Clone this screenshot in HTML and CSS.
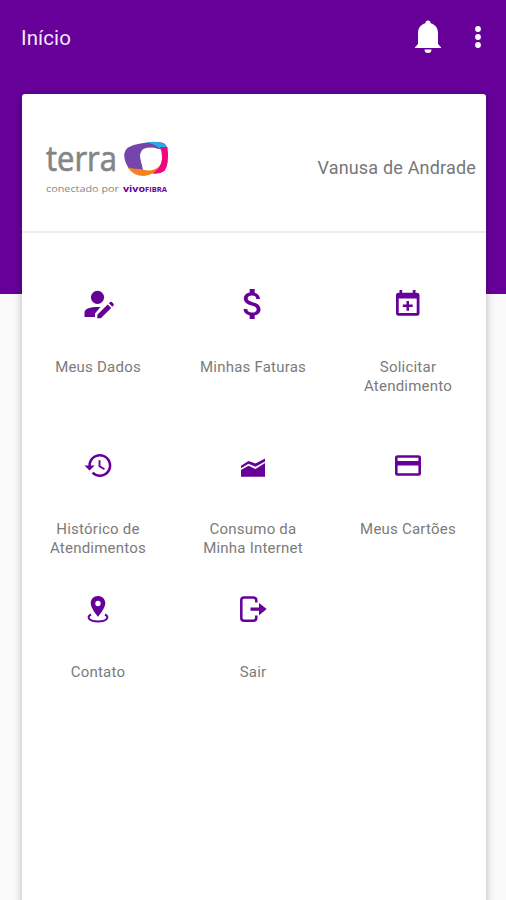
FILE: index.html
```html
<!DOCTYPE html>
<html lang="pt-BR">
<head>
<meta charset="utf-8">
<title>Início</title>
<link rel="stylesheet" href="styles.css">
</head>
<body>
<div class="app">
  <header class="bar">
    <h1 class="title">Início</h1>
    <svg class="bell" viewBox="0 0 26 34"><path d="M13 0.5a2.6 2.6 0 0 1 2.6 2.7C20.5 4.6 23 8 23 13.500V24l3 3.300V28H0v-.7L3 24V13.500C3 8 5.500 4.600 10.400 3.200A2.600 2.600 0 0 1 13 .5zM9.500 29.500h7a3.500 3.500 0 0 1-7 0z"/></svg>
    <svg class="more" viewBox="0 0 6 24"><circle cx="3" cy="4" r="2.900"/><circle cx="3" cy="12" r="2.900"/><circle cx="3" cy="20" r="2.900"/></svg>
  </header>
  <main class="card">
    <section class="account">
      <svg class="logo" viewBox="0 0 126 56" role="img">
        <text class="brand" x="1" y="31.500" textLength="71" lengthAdjust="spacingAndGlyphs">terra</text>
        <path fill="#7545ab" d="M83 8.500Q93 3 113 3Q122 3 122 10L113 10Q96 6 95 17L98 31L84 30Q75 15 83 8.500Z"/>
        <path fill="#26aee4" d="M101 3.200Q120 1 122 9L116 11Q111 5 101 3.200Z"/>
        <path fill="#ed087e" d="M115 8L122.500 8Q124.500 25 119.500 32Q114 36 105 34Q116 30 117 20Q117 12 115 8Z"/>
        <path fill="#f58220" d="M83 28.500Q90 30 96 30Q107 34 114 27Q110 36 99 37Q88 37 83 28.500Z"/>
        <path fill="#fff" d="M96.500 12Q98 8.500 106 8.500Q114.500 8.500 116 14Q118 26 110 30Q103 32 98 28Q94 19 96.500 12Z"/>
        <text class="by" x="1" y="53" textLength="73" lengthAdjust="spacingAndGlyphs">conectado por</text>
        <text class="vivo" x="78" y="53" textLength="22" lengthAdjust="spacingAndGlyphs">vivo</text>
        <text class="fibra" x="100" y="53" textLength="22" lengthAdjust="spacingAndGlyphs">FIBRA</text>
      </svg>
      <span class="name">Vanusa de Andrade</span>
    </section>
    <nav class="menu">
      <a class="item"><svg class="icon" viewBox="0 0 40 40"><circle cx="19.500" cy="13.300" r="6.600"/><path d="M6.500 33v-4.500C6.500 24 14 22.600 22.500 23L17 29.500V33zM19.300 34.300v-3.500L29.700 20.400l3.500 3.500L22.800 34.300zM30.900 19.300l1.300-1.200q.8-.7 1.600 0l1.700 1.700q.7.8 0 1.600l-1.200 1.300z"/></svg><span class="label">Meus Dados</span></a>
      <a class="item"><svg class="icon" viewBox="0 0 24 24"><path d="M11.800 10.900c-2.270-.59-3-1.200-3-2.150 0-1.090 1.010-1.850 2.700-1.850 1.780 0 2.440.85 2.500 2.100h2.210c-.07-1.720-1.120-3.300-3.210-3.810V3h-3v2.160c-1.940.42-3.500 1.680-3.500 3.610 0 2.310 1.910 3.460 4.700 4.130 2.500.6 3 1.480 3 2.410 0 .69-.49 1.790-2.700 1.790-2.060 0-2.870-.92-2.980-2.100h-2.200c.12 2.190 1.760 3.420 3.680 3.830V21h3v-2.150c1.950-.37 3.500-1.500 3.500-3.550 0-2.840-2.430-3.810-4.700-4.400z"/></svg><span class="label">Minhas Faturas</span></a>
      <a class="item"><svg class="icon" viewBox="0 0 40 40"><path fill-rule="evenodd" d="M11.500 6h2.700v2.700h10.600V6h2.700v2.700H29q2.500 0 2.500 2.500v18q0 2.500-2.500 2.500H10.500Q8 31.700 8 29.200v-18q0-2.500 2.500-2.500h1zM10.700 14.500V29h18V14.500zM18.500 17h2.500v3.500h3.700V23H21v3.700h-2.500V23h-3.700v-2.500h3.700z"/></svg><span class="label">Solicitar<br>Atendimento</span></a>
      <a class="item"><svg class="icon" viewBox="0 0 40 40"><path transform="translate(5.200 4.100) scale(1.280)" d="M13 3c-4.970 0-9 4.030-9 9H1l3.890 3.890.07.14L9 12H6c0-3.870 3.130-7 7-7s7 3.130 7 7-3.130 7-7 7c-1.930 0-3.680-.79-4.940-2.060l-1.420 1.420C8.270 19.990 10.510 21 13 21c4.970 0 9-4.030 9-9s-4.030-9-9-9zm-1 5v5l4.280 2.540.72-1.210-3.500-2.080V8H12z"/></svg><span class="label">Histórico de<br>Atendimentos</span></a>
      <a class="item"><svg class="icon" viewBox="0 0 40 40"><path d="M8 30.800V24l7.500-4.200 7 3.200L32 17v13.800zM8 19.700l7.500-4.700 7 2.600L32 12.500v2.900l-9.500 5.400-7-3L8 22.300z"/></svg><span class="label">Consumo da<br>Minha Internet</span></a>
      <a class="item"><svg class="icon" viewBox="0 0 40 40"><path fill-rule="evenodd" d="M9.500 9.200h21q2.500 0 2.500 2.500v15.600q0 2.500-2.500 2.500h-21Q7 29.800 7 27.300V11.700q0-2.500 2.500-2.500zM9.600 11.800v3.200h20.800v-3.200zM9.600 19.500v7.700h20.800v-7.700z"/></svg><span class="label">Meus Cartões</span></a>
      <a class="item"><svg class="icon" viewBox="0 0 40 40"><path fill-rule="evenodd" d="M20 7c-4.300 0-7.300 3.200-7.300 7.300 0 5.200 7.300 13.500 7.300 13.500s7.300-8.300 7.300-13.500C27.300 10.200 24.300 7 20 7zm0 4.800a2.700 2.700 0 1 1 0 5.400 2.700 2.700 0 0 1 0-5.400z"/><path class="ring" d="M13 25.500C8 28 11 32.500 20 32.500S32 28 27 25.500"/></svg><span class="label">Contato</span></a>
      <a class="item"><svg class="icon" viewBox="0 0 40 40"><path class="door" d="M23.300 13.500v-2q0-3-3-3H11q-2.700 0-2.700 2.700V29q0 2.700 2.700 2.700h9.300q3 0 3-3v-2.200"/><path d="M17.500 18.400H26V14l7.700 6L26 26.200v-4.400h-8.500z"/></svg><span class="label">Sair</span></a>
    </nav>
  </main>
</div>
</body>
</html>
```
FILE: styles.css
```css
* { box-sizing: border-box; }
body { margin: 0; font-family: Roboto, "Liberation Sans", sans-serif; }
.app {
  height: 900px;
  overflow: hidden;
  background: linear-gradient(#660099 294px, #fafafa 294px);
}
.bar {
  display: flex;
  align-items: center;
  height: 94px;
  padding: 0 25px 20px 21px;
  color: #fff;
}
.title { flex: 1; margin: 0; padding-top: 2px; font-size: 20.500px; font-weight: 400; line-height: 24px; letter-spacing: .1px; color: #f3e6fa; }
.bell { width: 26px; height: 34px; margin-right: 34px; fill: #fff; }
.more { width: 6px; height: 24px; fill: #fff; }
.card {
  width: 464px;
  height: 830px;
  margin-left: 22px;
  background: #fff;
  border-radius: 3px;
  box-shadow: 0 2px 8px rgba(0, 0, 0, .28);
}
.account {
  display: flex;
  align-items: center;
  justify-content: space-between;
  height: 139px;
  padding: 9px 10px 0 23px;
  border-bottom: 2px solid #eee;
}
.logo { width: 126px; height: 56px; overflow: visible; }
.brand { font: 400 34px "Open Sans", sans-serif; fill: #858585; stroke: #858585; stroke-width: .7; }
.by { font: 8.500px "Open Sans", sans-serif; fill: #888; }
.vivo { font: 700 9px "Open Sans", sans-serif; fill: #660099; }
.fibra { font: 700 6.500px "Open Sans", sans-serif; fill: #660099; }
.name { padding-top: 1px; font-size: 18px; letter-spacing: .18px; color: #777; }
.menu {
  display: grid;
  grid-template-columns: repeat(3, 155px);
  grid-template-rows: 162px 143px 143px;
  margin-left: -1px;
  padding-top: 51px;
}
.item { display: flex; flex-direction: column; align-items: center; gap: 34px; }
.icon { width: 40px; height: 40px; margin-left: -1px; fill: #660099; }
.ring, .door { fill: none; stroke: #660099; stroke-width: 2.5; }
.ring { stroke-width: 2; }
.label { margin-left: -1px; font-size: 15px; line-height: 18.500px; letter-spacing: .22px; text-align: center; color: #7b7b7b; }
```
